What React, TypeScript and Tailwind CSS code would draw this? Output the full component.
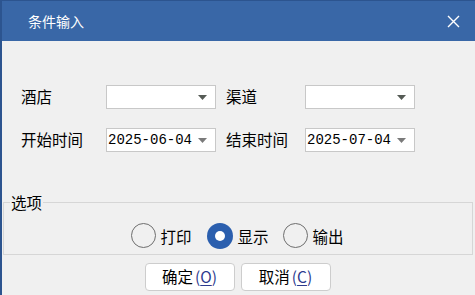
import React from "react";

const cjk = { fontFamily: '"Microsoft YaHei", "Noto Sans CJK SC", sans-serif' };

function Arrow({ dark }: { dark?: boolean }) {
  return (
    <svg width="9" height="5" viewBox="0 0 9 5" className="shrink-0">
      <path d="M0 0h9L4.5 5z" fill={dark ? "#555b55" : "#7a7a7a"} />
    </svg>
  );
}

function Combo({ value }: { value?: string }) {
  return (
    <div className="flex h-[24px] w-[110px] items-center justify-between border border-[#c8c8c8] bg-white pl-[1px] pr-[8px]">
      <span className="text-[14px] leading-none text-black" style={{ fontFamily: '"Liberation Mono", monospace' }}>
        {value ?? ""}
      </span>
      <Arrow dark={!value} />
    </div>
  );
}

function Radio({ label, checked }: { label: string; checked?: boolean }) {
  return (
    <div className="flex h-[34px] w-[71px] items-start gap-[5px] bg-[#f0f0f0] pl-[4px] pt-[3px]">
      {checked ? (
        <span className="flex h-[26px] w-[26px] shrink-0 items-center justify-center rounded-full bg-[#2b5fae]">
          <span className="h-[10px] w-[10px] rounded-full bg-white" />
        </span>
      ) : (
        <span className="h-[25px] w-[25px] shrink-0 rounded-full border-[1.5px] border-[#6e6e6e] bg-[#f0f0f0]" />
      )}
      <span className="mt-[1px] text-[15.5px] leading-[24px] text-black">{label}</span>
    </div>
  );
}

function Btn({ text, key1 }: { text: string; key1: string }) {
  return (
    <button className="flex h-[28px] w-[90px] items-center justify-center rounded-[4px] border border-[#cdcdcd] bg-white text-[15.5px] leading-none text-black">
      <span>{text}</span>
      <span className="ml-[2px] text-[#2d3a8e]">
        (<span className="underline underline-offset-2">{key1}</span>)
      </span>
    </button>
  );
}

export default function App() {
  return (
    <div className="h-[295px] w-[475px] overflow-hidden border-l-2 border-t border-[#2c548f] bg-[#f0f0f0]" style={cjk}>
      <div className="flex h-[40px] items-center justify-between bg-[#3967a7] pl-[26px] pr-[15px]">
        <span className="text-[14px] text-white">条件输入</span>
        <svg width="13" height="13" viewBox="0 0 13 13">
          <path d="M1 1l11 11M12 1L1 12" stroke="white" strokeWidth="1.4" />
        </svg>
      </div>

      <div className="flex flex-col gap-[19px] pl-[19px] pt-[44px]">
        <div className="flex items-center">
          <span className="w-[85px] text-[15.5px] text-black">酒店</span>
          <Combo />
          <span className="ml-[10px] w-[79px] text-[15.5px] text-black">渠道</span>
          <Combo />
        </div>
        <div className="flex items-center">
          <span className="w-[85px] text-[15.5px] text-black">开始时间</span>
          <Combo value="2025-06-04" />
          <span className="ml-[10px] w-[79px] text-[15.5px] text-black">结束时间</span>
          <Combo value="2025-07-04" />
        </div>
      </div>

      <div className="relative ml-[1px] mt-[50px] h-[53px] w-[470px] border border-[#d6d6d6]">
        <span className="absolute left-[6px] top-[-12px] bg-[#f0f0f0] px-[1px] text-[15.5px] leading-[22px] text-black">选项</span>
        <div className="relative flex justify-center gap-[5px] pt-[17px]">
          <Radio label="打印" />
          <Radio label="显示" checked />
          <Radio label="输出" />
        </div>
      </div>

      <div className="mt-[8px] flex justify-center gap-[6px] pr-[2px]">
        <Btn text="确定" key1="O" />
        <Btn text="取消" key1="C" />
      </div>
    </div>
  );
}
